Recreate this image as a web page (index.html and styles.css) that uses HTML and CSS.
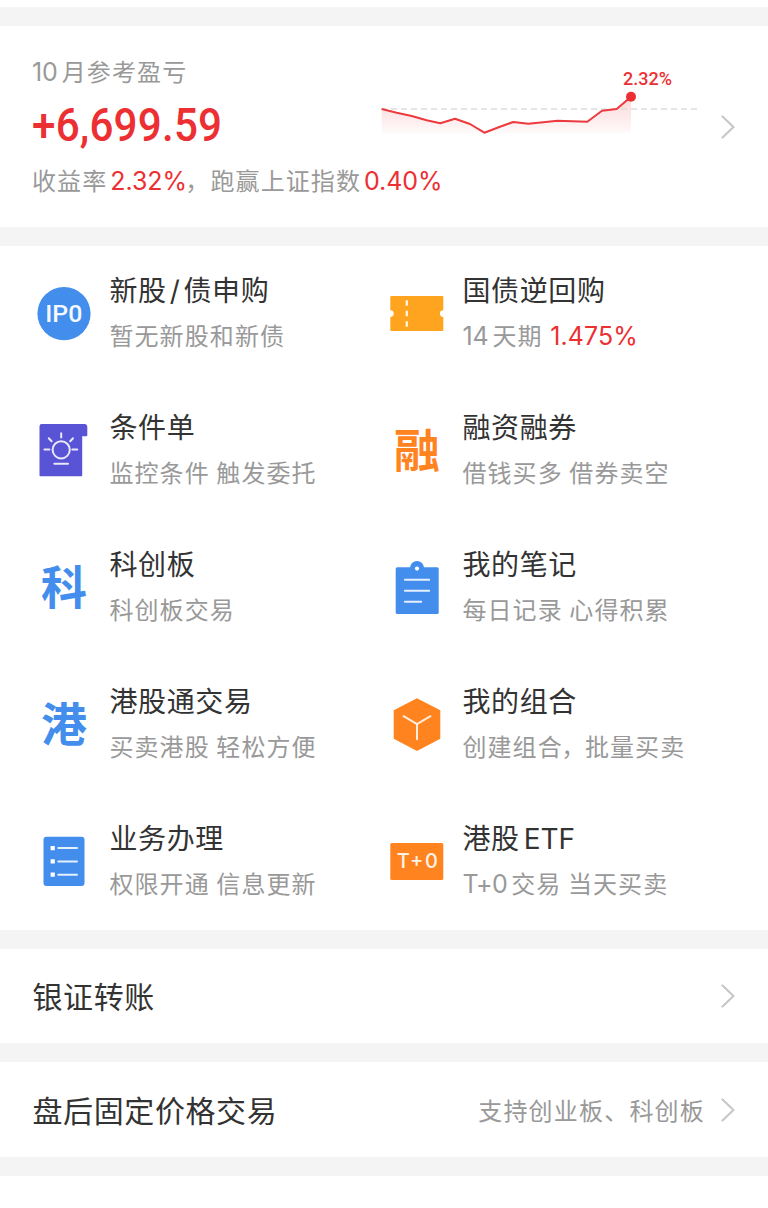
FILE: index.html
```html
<!DOCTYPE html>
<html lang="zh-CN">
<head>
<meta charset="utf-8">
<title>交易</title>
<link rel="stylesheet" href="styles.css">
</head>
<body>
<main class="page">
  <section class="profit">
    <div class="profit-label"><span class="num">10</span>月参考盈亏</div>
    <div class="profit-amount"><span class="amount-text">+6,699.59</span></div>
    <svg class="chart" viewBox="0 0 320 106">
      <defs>
        <linearGradient id="fade" x1="0" y1="42" x2="0" y2="80" gradientUnits="userSpaceOnUse">
          <stop offset="0" stop-color="#ec2f33" stop-opacity=".2"/>
          <stop offset="1" stop-color="#ec2f33" stop-opacity=".02"/>
        </linearGradient>
      </defs>
      <path fill="url(#fade)" d="M.7 55 15.7 58.7 30.7 62 45.7 66.3 59.3 69.3 74 64.7 89 70 103.3 78.7 118.3 73 132.3 68 147.3 69.7 162.3 68.3 176.3 66.7 206.3 67.7 221 56.7 235.7 55 250 42.7V79.5H.7Z"/>
      <path class="baseline" d="M0 55H319"/>
      <path class="trend" d="M.7 55 15.7 58.7 30.7 62 45.7 66.3 59.3 69.3 74 64.7 89 70 103.3 78.7 118.3 73 132.3 68 147.3 69.7 162.3 68.3 176.3 66.7 206.3 67.7 221 56.7 235.7 55 250 42.7"/>
      <circle cx="250" cy="42.7" r="5" fill="#ec2f33"/>
      <text class="chart-text" x="242" y="31" textLength="49" lengthAdjust="spacingAndGlyphs">2.32%</text>
    </svg>
    <div class="profit-note">收益率<span class="num up gap-l">2.32%</span><span class="comma wide">，</span>跑赢上证指数<span class="num up gap-l">0.40%</span></div>
    <svg class="chevron profit-more" viewBox="0 0 14 24"><path d="M1.5 1.5 12.5 12 1.5 22.5"/></svg>
  </section>

  <section class="menu">
    <div class="item">
      <svg class="icon" viewBox="0 0 54 54"><circle cx="27" cy="26.6" r="26.6" fill="#438eec"/><text class="ipo" x="8.3" y="35" textLength="37" lengthAdjust="spacingAndGlyphs">IP0</text></svg>
      <div><div class="title">新股<span class="slash">/</span>债申购</div><div class="sub">暂无新股和新债</div></div>
    </div>
    <div class="item">
      <svg class="icon" viewBox="0 0 54 54"><path fill="#ffa41f" d="M1.3 9.1h51a1 1 0 0 1 1 1V23.2a3.4 3.4 0 0 0 0 6.8v13.1a1 1 0 0 1-1 1h-51a1 1 0 0 1-1-1V30a3.4 3.4 0 0 0 0-6.8V10.1a1 1 0 0 1 1-1Z"/><path stroke="#fff3dc" stroke-width="2.3" d="M16.8 13.3v5.4M16.8 23.7v5.5M16.8 34.3v5.4"/></svg>
      <div><div class="title">国债逆回购</div><div class="sub"><span class="num">14</span>天期<span class="num up gap-rate">1.475%</span></div></div>
    </div>
    <div class="item">
      <svg class="icon" viewBox="0 0 54 54"><path fill="#5953d6" d="M4.7 0H47.3a3 3 0 0 1 3 3V11.2a1 1 0 0 1-1 1H45.2V51.3a1 1 0 0 1-1 1H3.5a1 1 0 0 1-1-1V2.2A2.2 2.2 0 0 1 4.7 0Z"/><g class="line" stroke="#e9e8fb"><circle cx="24.2" cy="25.8" r="8.6"/><path d="M7.4 25.6h5M35.3 25.6h5M24.2 9.3v4.2M11.8 14.3l2.8 3M36 14.3l-2.8 3M17.3 39.8H31"/></g></svg>
      <div><div class="title">条件单</div><div class="sub">监控条件<span class="space"></span>触发委托</div></div>
    </div>
    <div class="item">
      <div class="icon glyph orange">融</div>
      <div><div class="title">融资融券</div><div class="sub">借钱买多<span class="space"></span>借券卖空</div></div>
    </div>
    <div class="item">
      <div class="icon glyph">科</div>
      <div><div class="title">科创板</div><div class="sub">科创板交易</div></div>
    </div>
    <div class="item">
      <svg class="icon" viewBox="0 0 54 54"><circle cx="27" cy="7" r="7" fill="#438eec"/><rect x="5.7" y="6.3" width="43" height="46.7" rx="1.5" fill="#438eec"/><circle cx="27" cy="7.6" r="2.1" fill="#fff"/><path class="line" stroke="#e5f0fd" d="M14.9 18.7H39.2M14.9 29.8H39.2M14.9 40.7H31.2"/></svg>
      <div><div class="title">我的笔记</div><div class="sub">每日记录<span class="space"></span>心得积累</div></div>
    </div>
    <div class="item">
      <div class="icon glyph">港</div>
      <div><div class="title">港股通交易</div><div class="sub">买卖港股<span class="space"></span>轻松方便</div></div>
    </div>
    <div class="item">
      <svg class="icon" viewBox="0 0 54 54"><path fill="#ff831e" stroke="#ff831e" stroke-width="2" stroke-linejoin="round" d="M27 1.3 49.3 13V40L27 51.8 4.7 40V13Z"/><path class="line" stroke="#ffeede" d="M13.6 18.2 27 26 40.5 18.2M27 26V41.3"/></svg>
      <div><div class="title">我的组合</div><div class="sub">创建组合<span class="comma">，</span>批量买卖</div></div>
    </div>
    <div class="item">
      <svg class="icon" viewBox="0 0 54 54"><rect x="6.5" y="1.7" width="41" height="49.4" rx="3" fill="#438eec"/><path fill="#fff" d="M13.6 11h4.2v4.2h-4.2zM13.6 24.3h4.2v4.2h-4.2zM13.6 37.6h4.2v4.2h-4.2z"/><path class="line" stroke="#e5f0fd" d="M21.3 13.1H40M21.3 26.4H40M21.3 39.7H40"/></svg>
      <div><div class="title">业务办理</div><div class="sub">权限开通<span class="space"></span>信息更新</div></div>
    </div>
    <div class="item">
      <svg class="icon" viewBox="0 0 54 54"><rect x=".3" y="8.1" width="53" height="36.8" rx="1.5" fill="#ff831e"/><text class="t0" x="6.8" y="33.4" textLength="41" lengthAdjust="spacing">T+0</text></svg>
      <div><div class="title">港股<span class="etf">ETF</span></div><div class="sub"><span class="num tplus">T+0</span>交易<span class="space"></span>当天买卖</div></div>
    </div>
  </section>

  <section class="row">
    <span class="row-title">银证转账</span>
    <svg class="chevron" viewBox="0 0 14 24"><path d="M1.5 1.5 12.5 12 1.5 22.5"/></svg>
  </section>
  <section class="row">
    <span class="row-title">盘后固定价格交易</span>
    <span class="row-note">支持创业板、科创板</span>
    <svg class="chevron" viewBox="0 0 14 24"><path d="M1.5 1.5 12.5 12 1.5 22.5"/></svg>
  </section>
  <section class="rest"></section>
</main>
</body>
</html>
```
FILE: styles.css
```css
* { box-sizing: border-box; }
body {
  margin: 0;
  background: #fff;
  font-family: Inter, "Noto Sans CJK SC", sans-serif;
  color: #333;
}
.page {
  width: 768px;
  height: 1208px;
  padding-top: 7px;
  display: flex;
  flex-direction: column;
  overflow: hidden;
}
.profit, .menu, .row, .rest { border-top: 19.5px solid #f4f4f4; }

.profit {
  height: 219.5px;
  padding: 27.5px 33px 0 32px;
  display: grid;
  grid-template-columns: 349px 320px 1fr;
  grid-template-rows: 36px 70px 42px;
}
.profit-label, .profit-note, .sub, .row-note {
  font-size: 24px;
  letter-spacing: 1.1px;
  color: #999;
  white-space: nowrap;
}
.profit-label { grid-area: 1 / 1; line-height: 36px; }
.profit-amount { grid-area: 2 / 1; line-height: 70px; }
.amount-text {
  display: inline-block;
  font-family: Roboto, sans-serif;
  font-size: 46px;
  font-weight: 500;
  letter-spacing: .2px;
  color: #ec2f33;
  transform: scaleX(.918);
  transform-origin: left;
}
.chart { grid-area: 1 / 2 / 3 / 3; width: 320px; height: 106px; }
.baseline { stroke: #ddd; stroke-width: 1.6; stroke-dasharray: 6 4; }
.trend { fill: none; stroke: #ec3a3e; stroke-width: 2; stroke-linejoin: round; }
.chart-text { font: 500 19px Roboto, sans-serif; fill: #ec2f33; }
.profit-note { grid-area: 3 / 1 / 4 / 3; line-height: 42px; }
.profit-more { grid-area: 1 / 3 / 4 / 4; justify-self: end; align-self: center; margin-bottom: 2px; }

.num { font-size: 25px; letter-spacing: -.1px; margin-right: 4px; }
.up { color: #ec2f33; margin-right: 0; }
.gap-l { margin-left: 3px; }
.gap-rate { margin-left: 7.5px; letter-spacing: .1px; }
.comma { margin-left: -1.5px; margin-right: -1.5px; }
.comma.wide { margin-right: 0; }

.menu {
  height: 703px;
  padding-left: 37px;
  display: grid;
  grid-template-columns: 353px 1fr;
  grid-template-rows: repeat(5, 1fr);
}
.item { display: flex; align-items: center; gap: 18.4px; padding-top: 1px; }
.icon { width: 54px; height: 54px; flex: none; }
.line { fill: none; stroke-width: 2; stroke-linecap: round; }
.ipo { font: 500 23px Roboto, sans-serif; fill: #f3f9ff; }
.t0 { font: 500 20px Inter, sans-serif; fill: #fff3e8; }
.glyph {
  font: 700 46px/46px "Noto Sans CJK SC", sans-serif;
  text-align: center;
  color: #438eec;
}
.orange { color: #ff831e; }
.title {
  font-size: 28px;
  line-height: 45px;
  letter-spacing: .65px;
  white-space: nowrap;
}
.sub { line-height: 45px; }
.slash { margin: 0 3px; }
.etf { margin-left: 4px; letter-spacing: 0; }
.tplus { letter-spacing: -.6px; }
.space { display: inline-block; width: 6.5px; }

.row {
  height: 113.8px;
  padding: 0 33px 0 32.5px;
  display: flex;
  align-items: center;
}
.row-title { flex: 1; font-size: 30px; letter-spacing: .6px; padding-bottom: 2px; }
.row-note { margin-right: 16px; padding-bottom: 1px; letter-spacing: 1.2px; }
.chevron { width: 14px; height: 24px; flex: none; }
.chevron path { fill: none; stroke: #c8c8c8; stroke-width: 2.2; stroke-linecap: round; stroke-linejoin: round; }
```
